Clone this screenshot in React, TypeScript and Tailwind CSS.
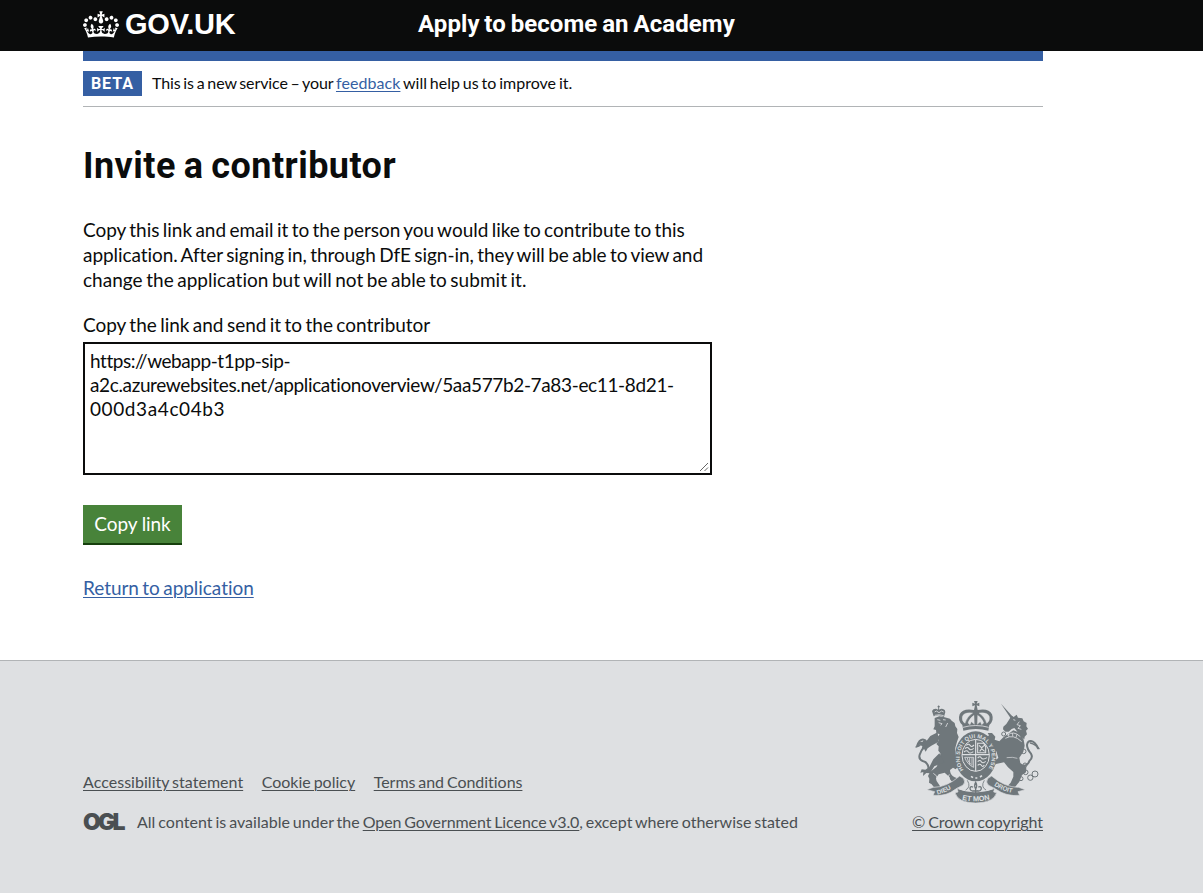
import type { ReactNode } from "react";

function Crown() {
  return (
    <svg viewBox="0 0 132 97" className="h-[27px] w-9 shrink-0" fill="currentColor" aria-hidden="true">
      <path
        fillRule="evenodd"
        d="M25 30.2c3.5 1.5 7.7-.2 9.1-3.7 1.5-3.6-.2-7.8-3.9-9.2-3.6-1.4-7.6.3-9.1 3.9-1.4 3.5.3 7.5 3.9 9zM9 39.5c3.6 1.5 7.8-.2 9.2-3.7 1.5-3.6-.2-7.8-3.9-9.1-3.6-1.5-7.6.2-9.1 3.8-1.4 3.5.3 7.5 3.8 9zM4.4 57.2c3.5 1.5 7.7-.2 9.1-3.8 1.5-3.6-.2-7.7-3.9-9.1-3.5-1.5-7.6.3-9.1 3.8-1.4 3.5.3 7.6 3.9 9.1zm38.3-21.4c3.5 1.5 7.7-.2 9.1-3.8 1.5-3.6-.2-7.7-3.9-9.1-3.6-1.5-7.6.3-9.1 3.8-1.3 3.6.4 7.7 3.9 9.1zm64.4-5.6c-3.6 1.5-7.8-.2-9.1-3.7-1.5-3.6.2-7.8 3.8-9.2 3.6-1.4 7.7.3 9.2 3.9 1.3 3.5-.4 7.5-3.9 9zm15.9 9.3c-3.6 1.5-7.7-.2-9.1-3.7-1.5-3.6.2-7.8 3.7-9.1 3.6-1.5 7.7.2 9.2 3.8 1.5 3.5-.3 7.5-3.8 9zm4.7 17.7c-3.6 1.5-7.8-.2-9.2-3.8-1.5-3.6.2-7.7 3.9-9.1 3.6-1.5 7.7.3 9.2 3.8 1.3 3.5-.4 7.6-3.9 9.1zM89.3 35.8c-3.6 1.5-7.8-.2-9.2-3.8-1.4-3.6.2-7.7 3.9-9.1 3.6-1.5 7.7.3 9.2 3.8 1.4 3.6-.3 7.7-3.9 9.1zM69.7 17.7l8.9 4.7V9.3l-8.9 2.8c-.2-.3-.5-.6-.9-.9L72.4 0H59.6l3.5 11.2c-.3.3-.6.5-.9.9l-8.8-2.8v13.1l8.8-4.7c.3.3.6.7.9.9l-5 15.4v.1c-.2.8-.4 1.6-.4 2.4 0 4.1 3.1 7.5 7 8.1h.2c.3 0 .7.1 1 .1.4 0 .7 0 1-.1h.2c4-.6 7.1-4.1 7.1-8.1 0-.8-.1-1.7-.4-2.4V34l-5.1-15.4c.4-.2.7-.6 1-.9zM66 92.8c16.9 0 32.8 1.1 47.1 3.2 4-16.9 8.9-26.7 14-33.5l-9.6-3.4c1 4.9 1.1 7.2 0 10.2-1.5-1.4-3-4.3-4.2-8.7L108.6 76c2.8-2 5-3.2 7.5-3.3-4.4 9.4-10 11.9-13.6 11.2-4.3-.8-6.3-4.6-5.6-7.9 1-4.7 5.7-5.9 8-.5 4.3-8.7-3-11.4-7.6-8.8 7.1-7.2 7.9-13.5 2.1-21.1-8 6.1-8.1 12.3-4.5 20.8-4.7-5.4-12.1-2.5-9.5 6.2 3.4-5.2 7.9-2 7.2 3.1-.6 4.3-6.4 7.8-13.5 7.2-10.3-.9-10.9-8-11.2-13.8 2.5-.5 7.1 1.8 11 7.3L80.2 60c-4.1 4.4-8 5.3-12.3 5.4 1.4-4.4 8-11.6 8-11.6H55.5s6.4 7.2 7.9 11.6c-4.2-.1-8-1-12.3-5.4l1.4 16.4c3.9-5.5 8.5-7.7 10.9-7.3-.3 5.8-.9 12.8-11.1 13.8-7.2.6-12.9-2.9-13.5-7.2-.7-5 3.8-8.3 7.1-3.1 2.7-8.7-4.6-11.6-9.4-6.2 3.7-8.5 3.6-14.7-4.6-20.8-5.8 7.6-5 13.9 2.2 21.1-4.7-2.6-11.9.1-7.7 8.8 2.3-5.5 7.1-4.2 8.1.5.7 3.3-1.3 7.1-5.7 7.9-3.5.7-9-1.8-13.5-11.2 2.5.1 4.7 1.3 7.5 3.3l-4.7-15.4c-1.2 4.4-2.7 7.2-4.3 8.7-1.1-3-.9-5.3 0-10.2l-9.5 3.4c5 6.9 9.9 16.7 14 33.5 14.8-2.1 30.8-3.2 47.7-3.2z"
      />
    </svg>
  );
}

function RoyalArms() {
  return (
    <svg viewBox="45 33 375 306" className="h-[102px] w-[125px]" aria-hidden="true">
      <defs>
        <path id="garter" d="M191 240 A48 58 0 1 1 263 240" />
        <path id="scrollLeft" d="M112 314 Q148 304 172 284" />
        <path id="scrollMid" d="M186 329 Q227 339 272 328" />
        <path id="scrollRight" d="M282 286 Q311 306 347 310" />
      </defs>
      <g fill="#6f777b">
        {/* lion */}
        <path d="M101 79l-5-16q3-7 11-7 4 0 7 3l1-6-3-3 4-4 4 4-3 3 1 6q5-4 11-2 7 2 7 9l-4 15-15-5z" />
        <path d="M104 84l14-5 13 2 11 3q9 1 13 8l9 7 2 10 6 8-1 12 5 12-5 14-5 18-1 18q0 12 9 21l2 16-9 10-8-5-9 7q0 16 14 22 14 4 15 13-9 5-20 1-9-3-10-14l-15-14-18 5-8 12q0 10 8 17l6 10h-20l-7-9-8-5 1-12-4-8 6-12 20-16 9-20 2-20-6-8 1-13-7-7 7-10-4-10 7-9-10-4-1-9-8-2 4-9z" />
        <path d="M113 127l-22 11-11 14-9-1-10 14 6 4-3 13 8-6 5 9 6-10 11-8 22-12z" />
        <path d="M118 190l-18 18-12 23-12 8-11-1-4 10 9-2-1 12 10-9 11 1 13-21 30-12z" />
        {/* unicorn */}
        <path d="M303 41l38 42-7 5z" />
        <path d="M330 85l5-8 6 4 9-7 4 9 13 2 4 9 9 5-1 10 5 7-6 6 3 11-7 7-1 8-13-9-9-15-8-10-8 3-9 8-10 0-7-7 1-8 9-8z" />
        <path d="M321 134l19-13 17 6 14 22 3 18-4 18-12 18 3 16 18 12-1 16-12 8-8 20-12 15-10 6-16-5 12-13 8-18 0-14-16-14-12-15-24 5-14 12-7 16-14 5-11-6 9-7 14-7 12-18 18-13-6-20-16-8-13-17-4-13 11-10-4-7 13 0 10 11-2 9 14 5 12-12z" />
        {/* great crown */}
        <path d="M222 33h11l-3 8 8-3v11l-8-3 3 14q34-6 43 13 7 19-8 32l-3 17q-37-10-75 0l-3-17q-15-13-8-32 9-19 43-13l3-14-8 3V38l8 3z" />
        <ellipse cx="227" cy="199" rx="62" ry="75" />
      </g>
      <g fill="none" stroke="#6f777b" strokeLinecap="round">
        <path d="M86 236q-2-20-18-23-13-5-9-19 4-13 17-27 7-16-5-18-13-2-20 20 10-14 18-10" strokeWidth="6" />
        <path d="M366 228q18-1 22-15 12-10 5-22-12-14-12-26 2-13 12-12 12 1 21 22" strokeWidth="6" />
        <path d="M48 171q12-2 18-12M391 159q16 4 26 17" strokeWidth="4" />
      </g>
      <g fill="none" stroke="#dee0e2">
        <path d="M104 66l5-3 8 5 8-5 6 3M104 76q14-4 27 1" strokeWidth="2.5" />
        <path d="M112 89l9 2M129 89l8 1M116 98l10 3-4 5M143 99l-6 12M100 250l10 8 3 14M148 253l-4 10 10 12" strokeWidth="2.5" />
        <path d="M340 89l6 2M358 95l-7 9 10 3-7 8 10 3M322 136q18-16 39 4M316 145q24-14 49 10M325 132l2 9M338 129v10M351 133l-3 9" strokeWidth="2.5" />
        <path d="M352 205q-14-5-32-2" strokeWidth="2" />
        <path d="M218 69q-27-3-31 11-2 14 8 20 6-21 23-31zM237 69q27-3 31 11 2 14-8 20-6-21-23-31z" fill="#dee0e2" />
        <path d="M222 76q-14 9-18 23l6 5 4-9 9 8zM233 76q14 9 18 23l-6 5-4-9-9 8z" fill="#dee0e2" />
        <path d="M189 112q38-11 77 0" strokeWidth="2.5" />
        {/* shield quarters */}
        <ellipse cx="227" cy="196" rx="41" ry="48" strokeWidth="3" />
        <path d="M227 148v96M186 194h82" strokeWidth="3.5" />
        <path d="M199 166q7-7 11 0t12-1M195 176q7-7 12 0t14-1M192 186q8-7 13 0t15-1M233 160h18l6 10v18h-24zM237 166l8 7 8-7M239 184l6-8 9 8M233 204q7-7 11 0t17-1M233 215q7-7 11 0t13-1M233 226q7-7 11 0t9-1" strokeWidth="3.2" />
        <path d="M194 202h27v30q-19-8-27-30M202 204q1 14 12 20M209 203v20M216 203v24" strokeWidth="2.5" />
        <path d="M213 259l6 4M226 264h6M240 261l6-4" strokeWidth="5" />
      </g>
      <g fill="none" stroke="#6f777b" strokeWidth="3">
        <circle cx="311" cy="132" r="6" />
        <circle cx="371" cy="184" r="7" />
        <circle cx="375" cy="225" r="6" />
        <circle cx="352" cy="254" r="7" />
        <circle cx="377" cy="247" r="7" />
        <circle cx="391" cy="263" r="8" />
        <circle cx="405" cy="252" r="9" />
        <circle cx="363" cy="266" r="6" />
      </g>
      {/* motto scroll */}
      <g fill="#6f777b" stroke="#dee0e2" strokeWidth="2">
        <path d="M80 299l20-7q40 0 79-34 16 6 15 18-2 11-14 14l-14 8q-27 22-67 18l5-11z" />
        <path d="M376 299l-20-7q-42 0-81-34-16 6-15 18 2 11 14 14l14 8q31 22 71 18l-5-11z" />
        <path d="M165 308l9-2-3-12q25 12 56 12t57-12l-3 12 9 2q-8 30-63 31-54-1-62-31z" />
      </g>
      <g fill="#dee0e2">
        <path d="M193 288q9-10 4-23l9 8-1 18-11 12-20-5zM262 288q-9-10-4-23l-9 8 1 18 11 12 20-5z" />
      </g>
      <g fill="none" stroke="#6f777b">
        <path d="M202 271q12 20-5 29M253 271q-12 20 5 29" strokeWidth="2.5" />
        <path d="M227 277q-6 10 0 20 6-10 0-20zM227 297v13M223 302q-13 3-13-8 3-7 9-2M231 302q13 3 13-8-3-7-9-2M216 303h22" strokeWidth="4" />
      </g>
      <g fill="#dee0e2" fontFamily="Liberation Sans, sans-serif" fontWeight="700" fontSize="19">
        <text fontSize="16.5" letterSpacing="0.6"><textPath href="#garter">HONI SOIT QUI MAL Y PENSE</textPath></text>
        <text><textPath href="#scrollLeft">DIEU</textPath></text>
        <text fontSize="22"><textPath href="#scrollMid">ET MON</textPath></text>
        <text><textPath href="#scrollRight">DROIT</textPath></text>
      </g>
    </svg>
  );
}

function Line({ className, children }: { className: string; children: ReactNode }) {
  return <span className={`block whitespace-nowrap ${className}`}>{children}</span>;
}

function FooterLink({ className, children }: { className: string; children: ReactNode }) {
  return (
    <a href="#" className={`whitespace-nowrap underline decoration-1 underline-offset-2 ${className}`}>
      {children}
    </a>
  );
}

export default function App() {
  return (
    <div className="flex h-[893px] w-full flex-col overflow-hidden bg-white font-['Lato','Liberation_Sans',sans-serif] text-[#0b0c0c] [font-variant-ligatures:none]">
      <header className="h-[51px] bg-[#0b0c0c] text-white">
        <div className="ml-[83px] flex h-[48px] w-[960px] items-center">
          <a href="#" className="flex w-[334px] items-center gap-[6px]">
            <Crown />
            <span className="font-['Liberation_Sans',sans-serif] text-[29px] leading-[30px] font-bold tracking-[-0.2px]">GOV.UK</span>
          </a>
          <a href="#" className="pl-px font-['Roboto',sans-serif] text-[24px] leading-[30px] font-bold tracking-[0.07px] whitespace-nowrap [word-spacing:-1.2px]">
            Apply to become an Academy
          </a>
        </div>
      </header>

      <div className="ml-[83px] w-[960px]">
        <div className="h-[10px] bg-[#355fa3]" />
        <div className="flex h-[46px] items-center border-b border-[#b1b4b6] text-[16px] leading-5">
          <strong className="mr-[10px] flex h-[25px] w-[59px] items-center justify-center bg-[#355fa3] font-['Roboto',sans-serif] tracking-[1px] text-white">BETA</strong>
          <span className="-mt-px whitespace-pre [word-spacing:-1.2px]">
            <span className="tracking-[-0.11px]">This is a new service – your </span>
            <a href="#" className="tracking-[0.07px] text-[#355fa3] underline decoration-1 underline-offset-2">feedback</a>
            <span> will help us to improve it.</span>
          </span>
        </div>
      </div>

      <main className="ml-[83px] w-[629px] flex-1 pt-[39px] text-[19px] leading-[25px] [word-spacing:-1.4px]">
        <h1 className="font-['Roboto',sans-serif] text-[36px] leading-10 font-bold tracking-[0.45px] whitespace-nowrap [word-spacing:-1.5px]">Invite a contributor</h1>
        <p className="mt-[31px]">
          <Line className="tracking-[-0.03px]">Copy this link and email it to the person you would like to contribute to this </Line>
          <Line className="tracking-[-0.05px]">application. After signing in, through DfE sign-in, they will be able to view and </Line>
          <Line className="tracking-[0.03px]">change the application but will not be able to submit it.</Line>
        </p>
        <div id="link-label" className="mt-5 tracking-[-0.02px]">Copy the link and send it to the contributor</div>
        <div
          role="textbox"
          aria-multiline="true"
          aria-labelledby="link-label"
          className="mt-[5px] flex h-[133px] flex-col border-2 border-[#0b0c0c] pt-[5px] pl-[5px] leading-6"
        >
          <Line className="tracking-[-0.44px]">https://webapp-t1pp-sip-</Line>
          <Line className="tracking-[-0.36px]">a2c.azurewebsites.net/applicationoverview/5aa577b2-7a83-ec11-8d21-</Line>
          <Line className="tracking-[0.6px]">000d3a4c04b3</Line>
          <svg viewBox="0 0 10 10" className="mt-auto mr-px mb-px h-[10px] w-[10px] self-end" stroke="#555" strokeWidth="0.9" aria-hidden="true">
            <path d="M1 9L9 1M5.5 9L9 5.5" />
          </svg>
        </div>
        <button className="mt-[30px] block h-[40px] w-[99px] border-b-2 border-[#163f0d] bg-[#48833a] pb-px tracking-[-0.1px] whitespace-nowrap text-white">
          Copy link
        </button>
        <a href="#" className="mt-[30px] inline-block tracking-[-0.04px] text-[#355fa3] underline decoration-1 underline-offset-2">Return to application</a>
      </main>

      <footer className="h-[233px] border-t border-[#b1b4b6] bg-[#dee0e2] text-[16px] leading-5 text-[#4a4f52] [word-spacing:-1.2px]">
        <div className="ml-[83px] flex w-[960px] items-end justify-between pt-[40px]">
          <div>
            <div className="mb-5 flex gap-[18.5px]">
              <FooterLink className="tracking-[0.03px]">Accessibility statement</FooterLink>
              <FooterLink className="">Cookie policy</FooterLink>
              <FooterLink className="tracking-[-0.03px]">Terms and Conditions</FooterLink>
            </div>
            <div className="flex items-center">
              <span className="w-[54px] font-['Inter',sans-serif] text-[23px] leading-5 font-black tracking-[-2.9px]">OGL</span>
              <span className="whitespace-pre">
                <span className="tracking-[0.02px]">All content is available under the </span>
                <FooterLink className="tracking-[-0.07px]">Open Government Licence v3.0</FooterLink>, except where otherwise stated
              </span>
            </div>
          </div>
          <div className="flex flex-col items-end">
            <div className="mr-[3px] mb-[9px]">
              <RoyalArms />
            </div>
            <FooterLink className="tracking-[-0.05px]">© Crown copyright</FooterLink>
          </div>
        </div>
      </footer>
    </div>
  );
}
